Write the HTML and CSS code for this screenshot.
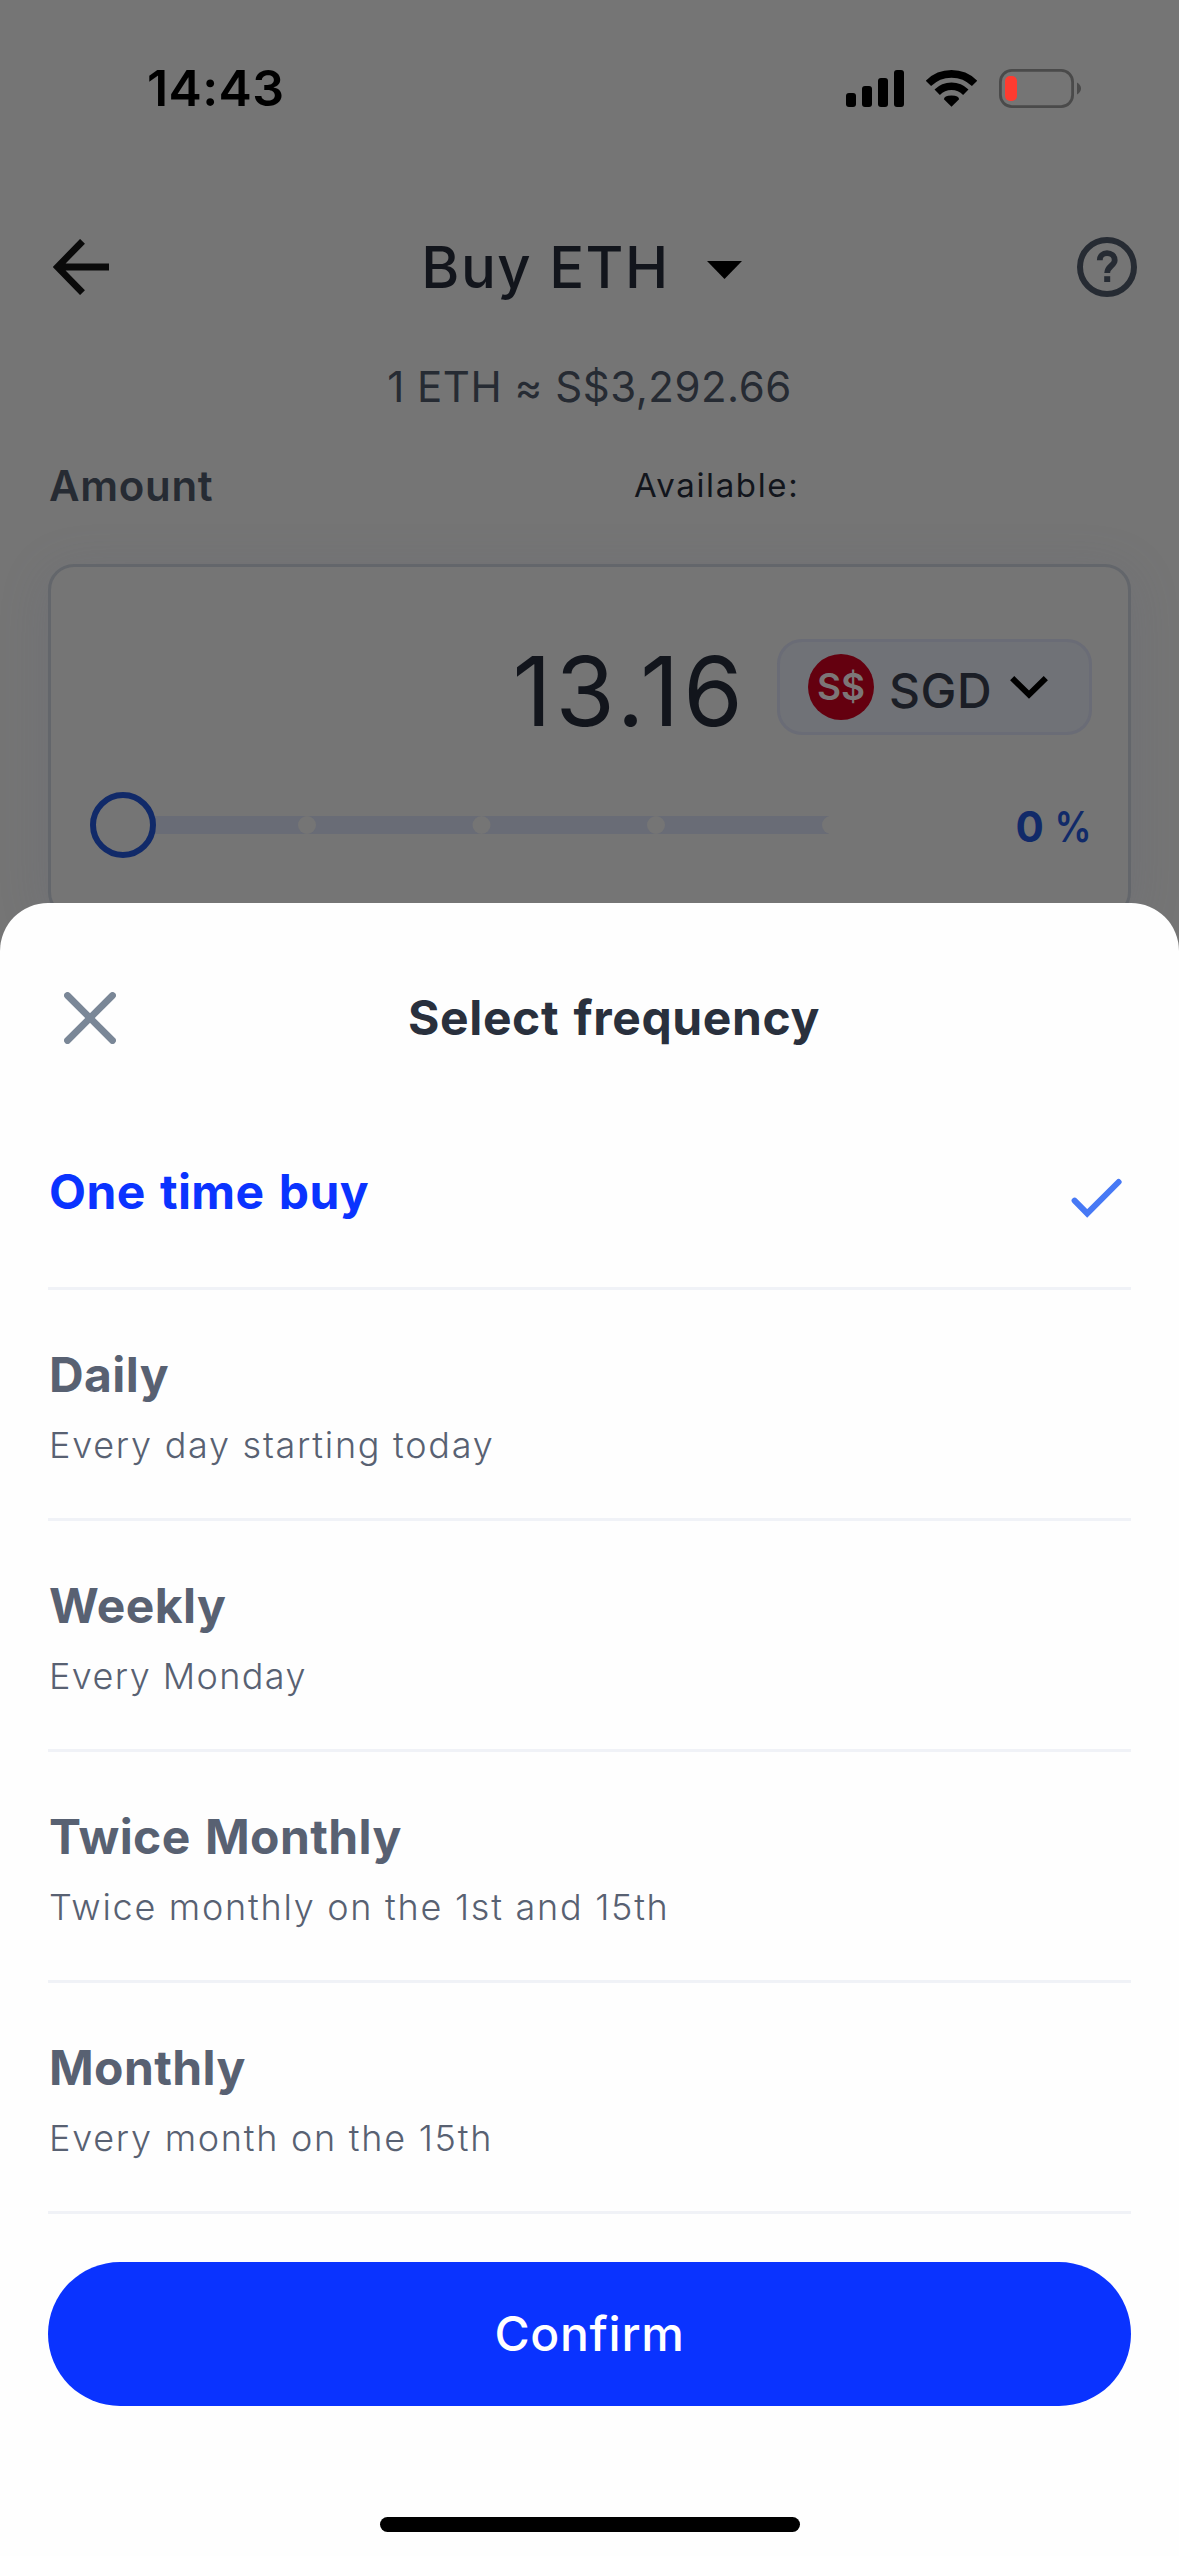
FILE: index.html
```html
<!DOCTYPE html>
<html lang="en">
<head>
<meta charset="utf-8">
<title>Buy ETH</title>
<link rel="stylesheet" href="styles.css">
</head>
<body>
<div class="screen">
  <div class="status-bar">
    <span class="time">14:43</span>
    <div class="status-icons">
      <svg width="58" height="37" viewBox="0 0 58 37">
        <rect x="0" y="23" width="10" height="14" rx="3"/>
        <rect x="16" y="16" width="10" height="21" rx="3"/>
        <rect x="32" y="8" width="10" height="29" rx="3"/>
        <rect x="48" y="0" width="10" height="37" rx="3"/>
      </svg>
      <svg width="51" height="37" viewBox="0 0 51 37">
        <path d="M2.4 13.4A32.7 32.7 0 0 1 48.6 13.4M11.2 22.2A20.2 20.2 0 0 1 39.8 22.2" fill="none" stroke="#000" stroke-width="7.6"/>
        <path d="M25.5 36.8L17.9 29.2Q17.9 25.7 25.5 25.5Q33.1 25.7 33.1 29.2Z"/>
      </svg>
      <svg width="83" height="39" viewBox="0 0 83 39">
        <rect x="1.4" y="1.4" width="72.2" height="36.2" rx="11.5" fill="none" stroke="#4a4a4a" stroke-width="2.8"/>
        <rect x="6" y="7" width="12" height="25" rx="5" fill="#ff3b30"/>
        <path d="M78 13.5Q82 16 82 19.5T78 25.5Z" fill="#4a4a4a"/>
      </svg>
    </div>
  </div>

  <header class="app-header">
    <svg class="back" width="56" height="56" viewBox="0 0 56 56" fill="none" stroke="#0a0a0a" stroke-width="6.8">
      <path d="M29.5 2.3L4.5 28L29.5 53.7M5 28H56"/>
    </svg>
    <div class="pair">
      <span>Buy ETH</span>
      <svg width="35" height="18" viewBox="0 0 35 18"><path d="M0 0H35L17.5 18Z"/></svg>
    </div>
    <svg class="help" width="60" height="60" viewBox="0 0 60 60" fill="none" stroke="#262b33">
      <circle cx="30" cy="30" r="27" stroke-width="6"/>
      <path d="M22.8 23.2C22.8 18.8 26 16.1 30 16.1S37.7 18.8 37.7 23.2C37.7 28.6 30.2 29.2 30.2 36" stroke-width="5.8"/>
      <path d="M30.2 39.2V45" stroke-width="6"/>
    </svg>
  </header>
  <div class="rate">1 ETH ≈ S$3,292.66</div>

  <div class="labels">
    <span class="amount-label">Amount</span>
    <span class="available">Available:</span>
  </div>

  <section class="card">
    <div class="amount-row">
      <span class="amount">13.16</span>
      <div class="currency">
        <span class="coin">S$</span>
        <span class="code">SGD</span>
        <svg width="38" height="23" viewBox="0 0 38 23" fill="none" stroke="#000" stroke-width="6"><path d="M2.2 2.2L19 18.6L35.8 2.2"/></svg>
      </div>
    </div>
    <div class="slider-row">
      <svg width="739" height="66" viewBox="0 0 739 66">
        <rect x="33" y="24" width="706" height="18" fill="#696c76"/>
        <g fill="#757575">
          <circle cx="217" cy="33" r="9"/>
          <circle cx="391.5" cy="33" r="9"/>
          <circle cx="566" cy="33" r="9"/>
          <circle cx="741" cy="33" r="9"/>
        </g>
        <circle cx="33" cy="33" r="30" fill="#757575" stroke="#112a69" stroke-width="6"/>
      </svg>
      <div class="percent"><b>0</b><span>%</span></div>
    </div>
  </section>

  <div class="sheet">
    <div class="sheet-header">
      <svg width="52" height="52" viewBox="0 0 52 52" fill="none" stroke="#7a8797" stroke-width="6.8" stroke-linecap="round"><path d="M3.5 3.5L48.5 48.5M48.5 3.5L3.5 48.5"/></svg>
      <h2>Select frequency</h2>
    </div>
    <ul class="options">
      <li class="selected">
        <h3>One time buy</h3>
        <svg width="52" height="40" viewBox="0 0 52 40" fill="none" stroke="#4779f5" stroke-width="6" stroke-linecap="round"><path d="M3.6 22.6L16.2 35.4L47.6 4"/></svg>
      </li>
      <li><h3>Daily</h3><p>Every day starting today</p></li>
      <li><h3>Weekly</h3><p class="tight">Every Monday</p></li>
      <li><h3>Twice Monthly</h3><p>Twice monthly on the 1st and 15th</p></li>
      <li><h3>Monthly</h3><p>Every month on the 15th</p></li>
    </ul>
    <button class="confirm">Confirm</button>
    <div class="home-indicator"></div>
  </div>
</div>
</body>
</html>
```

FILE: styles.css
```css
* { box-sizing: border-box; margin: 0; padding: 0; }
body { font-family: Inter, "Liberation Sans", sans-serif; background: #757575; }
svg { display: block; flex: none; }

.screen {
  position: relative;
  width: 1179px;
  height: 2556px;
  overflow: hidden;
  background: #757575;
}

.status-bar {
  display: flex;
  justify-content: space-between;
  align-items: center;
  height: 176px;
  padding: 0 97px 0 147px;
}
.time { font-size: 50px; font-weight: 600; letter-spacing: 0.4px; color: #000; }
.status-icons { display: flex; align-items: center; gap: 22px; }

.app-header {
  display: grid;
  grid-template-columns: 1fr auto 1fr;
  align-items: center;
  height: 182px;
  padding: 0 42px;
}
.back { margin-left: 11px; }
.pair {
  display: flex;
  align-items: center;
  gap: 37px;
  padding-right: 16px;
  font-size: 58px;
  font-weight: 500;
  letter-spacing: 1.5px;
  color: #12151c;
}
.pair svg { margin-top: 6px; }
.help { justify-self: end; }

.rate {
  height: 58px;
  line-height: 58px;
  text-align: center;
  font-size: 42px;
  letter-spacing: 0.52px;
  color: #262b33;
}

.labels {
  display: grid;
  grid-template-columns: 585px 1fr;
  height: 148px;
  padding: 40px 48px 0 49px;
  line-height: 60px;
}
.amount-label { font-size: 42px; font-weight: 600; letter-spacing: 0.7px; color: #262b33; }
.available { font-size: 33px; line-height: 58px; letter-spacing: 1.65px; color: #12151c; }

.card {
  height: 354px;
  margin: 0 48px;
  padding: 72px 36px 0 39px;
  border: 3px solid #63666b;
  border-radius: 26px;
  background: #757575;
  box-shadow: 0 8px 50px rgba(90, 96, 120, 0.2);
}
.amount-row { display: flex; justify-content: flex-end; align-items: center; gap: 30px; height: 96px; }
.amount { padding-top: 8px; font-size: 96px; line-height: 96px; letter-spacing: 4.1px; color: #12151c; }
.currency {
  display: flex;
  align-items: center;
  width: 315px;
  height: 96px;
  padding-left: 28px;
  border: 3px solid #6a6c76;
  border-radius: 25px;
  background: #707277;
}
.coin {
  width: 66px;
  height: 66px;
  border-radius: 50%;
  background: #64000f;
  color: #7c7677;
  font-size: 37px;
  font-weight: 600;
  line-height: 66px;
  text-align: center;
}
.code { margin: 7px 18px 0 15px; font-size: 48px; font-weight: 500; letter-spacing: 0.55px; color: #1b1e26; }

.slider-row { display: flex; justify-content: space-between; align-items: center; margin-top: 57px; }
.percent { display: flex; padding: 3px 0 0; margin-right: -2px; font-size: 42px; color: #112a69; }
.percent b { font-weight: 700; }
.percent span { margin-left: 8px; font-weight: 600; transform: scaleX(0.88); }

.sheet {
  position: absolute;
  left: 0;
  right: 0;
  bottom: 0;
  height: 1653px;
  border-radius: 48px 48px 0 0;
  background: #fefefe;
}
.sheet-header { display: flex; align-items: center; height: 229px; padding: 0 67px 0 64px; }
.sheet-header h2 {
  flex: 1;
  text-align: center;
  font-size: 48px;
  font-weight: 700;
  letter-spacing: 0.6px;
  word-spacing: 2.5px;
  color: #29303d;
}

.options { margin: 0 48px; list-style: none; color: #586172; }
.options li { height: 231px; padding: 54px 0 0 1px; border-bottom: 3px solid #f0f2f7; }
.options h3 { font-size: 48px; font-weight: 700; line-height: 61px; letter-spacing: 0.4px; word-spacing: 2.5px; }
.options p { margin-top: 18px; font-size: 36px; font-weight: 300; line-height: 44px; letter-spacing: 1.73px; }
.options .tight { letter-spacing: 1.4px; }
.options .selected {
  display: flex;
  justify-content: space-between;
  height: 158px;
  padding: 29px 8px 0 1px;
  color: #0a33ff;
}
.selected svg { margin-top: 17px; }

.confirm {
  display: block;
  width: 1083px;
  height: 144px;
  margin: 48px auto 0;
  padding-bottom: 2px;
  border: 0;
  border-radius: 72px;
  background: #0a33ff;
  color: #fff;
  font: 500 48px Inter, "Liberation Sans", sans-serif;
  letter-spacing: 0.7px;
}
.home-indicator { width: 420px; height: 15px; margin: 111px auto 0; border-radius: 8px; background: #000; }
```
